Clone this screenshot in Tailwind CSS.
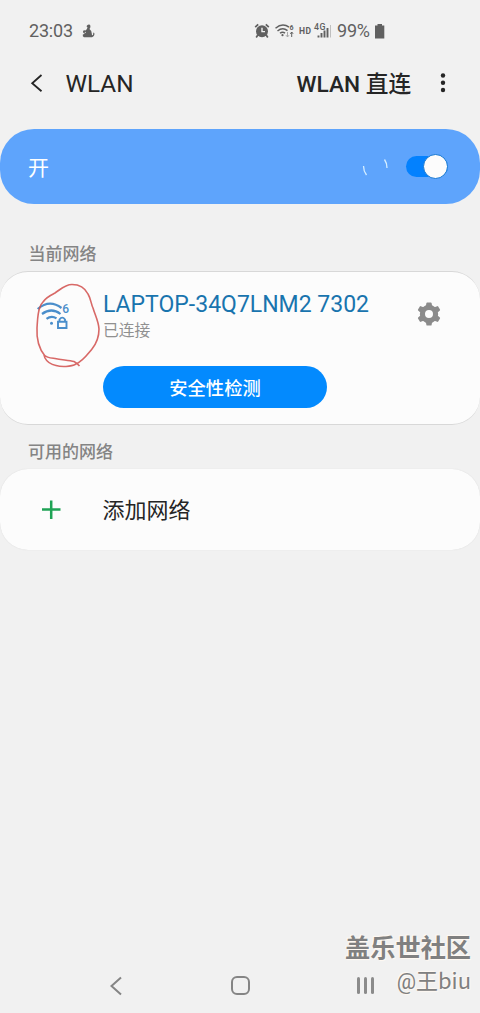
<!DOCTYPE html>
<html lang="zh-CN">
<head>
<meta charset="utf-8">
<title>WLAN</title>
<script src="https://cdn.jsdelivr.net/npm/@tailwindcss/browser@4"></script>
</head>
<body class="bg-[#f1f1f1]">
<div class="relative flex h-[1013px] w-[480px] flex-col overflow-hidden bg-[#f1f1f1] font-['Roboto','Noto_Sans_CJK_SC',sans-serif] whitespace-nowrap text-[#252525]">

  <!-- Status bar -->
  <div class="flex h-[62px] items-center pl-[29px] text-[18px] leading-none tracking-[-0.2px] text-[#606060]">
    <span class="w-[53px]">23:03</span>
    <svg class="h-[14px] w-[13px]" viewBox="0 0 13 14" fill="#606060"><path d="M4.500 2.200Q5.500 0 7.500.5Q9 1.500 8.300 3.500L7.500 5Q9.800 6.500 9.800 9.500L10 11.300Q11.500 11.300 11.300 8.500L12.300 9Q13 12 10 13.300H2Q.3 12.500.8 10.500Q1.500 9.800 3 10Q.5 9 1 7Q2 5.800 3.500 6.500Q5 5.500 5.500 3.500Z"/><path d="M2.500 8.200 3.800 7.800 3.600 9.300Z" fill="#f1f1f1"/></svg>
    <svg class="ml-[159px] h-[16px] w-[76px]" viewBox="0 0 76 16" fill="none" stroke="#606060">
      <circle cx="8" cy="8.300" r="6" fill="#606060" stroke="none"/>
      <path d="M1.200 4.200 4.200 1.300M11.800 1.300 14.800 4.200M3.800 12 2.200 14.500M12.200 12 13.800 14.500" stroke-width="1.700"/>
      <path d="M8 4.800V8.600H11" stroke="#f1f1f1" stroke-width="1.400"/>
      <path d="M21.500 5.200Q28.500-.7 35 4.200M23.500 8Q28.500 3.800 33.500 7.600M26 10.300Q28.500 8.200 31 10.100" stroke-width="1.500"/>
      <circle cx="28.500" cy="12.200" r="1.100" fill="#606060" stroke="none"/>
      <path d="M33.500 9V14M32 12.200 33.500 14 35 12.200" stroke="#aaa"/><path d="M37.700 14V9M36.300 10.800 37.700 9 39.100 10.800"/>
      <g fill="#606060" stroke="none" font-family="Roboto" font-weight="700" letter-spacing="0"><text x="35.500" y="6.500" font-size="7">6</text><text x="45" y="10.700" font-size="8.500" textLength="12">HD</text><text x="60" y="7" font-size="8.800" textLength="11.500" font-weight="500">4G</text></g>
      <path d="M64.500 14.500V12.500M67.500 14.500V10M70.500 14.500V7.500" stroke-width="1.900"/><path d="M73.500 14.500V5" stroke-width="1.900"/>
    </svg>
    <svg class="h-[16px] w-[3px]" viewBox="0 0 3 16"><path d="M0 2H.7V14.500H0Z" fill="#aaa"/></svg>
    <span class="ml-[4px] w-[37.500px]">99%</span>
    <svg class="h-[15px] w-[10px]" viewBox="0 0 10 15"><path d="M2.500 0H7V1.500H9.300V14.500H0V1.500H2.500Z" fill="#606060"/></svg>
  </div>

  <!-- Title bar -->
  <header class="flex h-[67px] items-start pt-[3px]">
    <div class="flex h-[36px] w-full items-center pl-[30px]">
      <svg class="h-[18px] w-[14px]" viewBox="0 0 14 18" fill="none" stroke="#252525" stroke-width="1.800"><path d="M11.500 1 2.200 9.200 11.500 17.200"/></svg>
      <h1 class="ml-[21.500px] w-[231px] pt-[2px] text-[24.300px] leading-none">WLAN</h1>
      <span class="w-[142px] pt-[5px] text-[22.700px] leading-none font-medium">WLAN 直连</span>
      <svg class="h-[20px] w-[7px]" viewBox="0 0 7 20" fill="#252525"><circle cx="4" cy="2.500" r="2.200"/><circle cx="4" cy="9.700" r="2.200"/><circle cx="4" cy="17" r="2.200"/></svg>
    </div>
  </header>

  <!-- Master switch -->
  <section class="flex h-[75px] items-center rounded-[34px] bg-[#5ea4fc] pl-[28px] text-white">
    <span class="w-[334px] pt-[4px] text-[21px] leading-none">开</span>
    <svg class="h-[18px] w-[27px]" viewBox="0 0 27 18" fill="none" stroke="#d5eeff" stroke-width="1.300"><path d="M1.500 8Q1.500 13 4.500 17M22.500 1.500Q25 5 25 10"/></svg>
    <div class="ml-[17px] flex h-[21px] w-[42px] items-center justify-end rounded-full bg-[#0381fe]">
      <div class="h-[25px] w-[25px] shrink-0 rounded-full border border-[#1577d3] bg-[#fcfcfc]"></div>
    </div>
  </section>

  <h2 class="flex h-[67px] items-end pb-[8px] pl-[28.500px] text-[17px] leading-[17px] font-medium text-[#848484]">当前网络</h2>

  <!-- Connected network -->
  <section class="flex h-[154px] rounded-[28px] border-y border-[#d8d8d8] bg-[#fcfcfc]">
    <div class="w-[103px] shrink-0 pt-[9px] pl-[33px]">
      <svg class="h-[90px] w-[70px]" viewBox="33 281 70 90" fill="none">
        <path d="M37.700 309Q49.500 299 61.500 308M42 314Q51.500 307 60.500 314M46.500 318.800Q51.500 315 56.500 318.300" stroke="#4a8ecb" stroke-width="2.200"/>
        <circle cx="51.500" cy="323.200" r="1.500" fill="#4a8ecb"/>
        <text x="62.300" y="313.300" font-family="Roboto" font-size="12" font-weight="500" fill="#4a8ecb">6</text>
        <path d="M58 321.700H66.500V328H58ZM59.500 321.500V319.500Q62.200 315.800 65 319.500V321.500" stroke="#4a8ecb" stroke-width="1.900"/>
        <path d="M43 302C46 297 51 295 55 293C61 289 65 284.500 72 284.500C80 284.500 85 288 88 294C91 299 91 304 93 308C95 315 98.500 321 99 329C99 337 96 344 92 349C87 355 83 361 76 364C71 367 61 367 56 365.500C51 364.500 47 362 45 358L44 355C47 358 51 358 55 358.500C62 360 69 360 74 361.500Q77 363 79.500 366M45 356C37.500 347 36.500 337 37 328C37.500 321 37.500 313 40 307Q41 304 43 302" stroke="#d14f4c" stroke-opacity=".85" stroke-width="1.600" stroke-linejoin="round"/>
      </svg>
    </div>
    <div class="flex w-[312px] flex-col items-start pt-[20px]">
      <span class="text-[23px] leading-[25px] text-[#1974ae]">LAPTOP-34Q7LNM2 7302</span>
      <span class="mt-[5px] text-[15.800px] leading-[18px] text-[#909090]">已连接</span>
      <button class="mt-[26px] flex h-[42px] w-[224px] items-center justify-center rounded-full bg-[#038afe] pt-[4px] text-[18.300px] leading-none font-medium text-white">安全性检测</button>
    </div>
    <svg class="mt-[29px] ml-[0.500px] h-[26px] w-[26px]" viewBox="-13 -13 26 26" fill="none" stroke="#8b8b8b">
      <circle r="6.600" stroke-width="5.200"/>
      <path d="M-2.300-8-1.800-10.800H1.800L2.300-8ZM-2.300 8-1.800 10.800H1.800L2.300 8ZM5.800-6 8.500-7.100 10.300-4 8.100-2ZM-5.800 6-8.500 7.100-10.300 4-8.100 2ZM5.800 6 8.500 7.100 10.300 4 8.100 2ZM-5.800-6-8.500-7.100-10.300-4-8.100-2Z" fill="#8b8b8b" stroke-width="1.600" stroke-linejoin="round"/>
    </svg>
  </section>

  <h2 class="flex h-[44px] items-end pb-[8px] pl-[28px] text-[17px] leading-[17px] font-medium text-[#848484]">可用的网络</h2>

  <!-- Add network -->
  <section class="flex h-[81px] items-center rounded-[28px] bg-[#fcfcfc] pl-[41px] shadow-[0_0_1px_#d0d0d0]">
    <svg class="h-[20px] w-[20px]" viewBox="0 0 20 20" fill="none" stroke="#1fa355" stroke-width="2.500"><path d="M1 9.500H19.500M10.200.5V19"/></svg>
    <span class="ml-[41.500px] pt-[3px] text-[22px] leading-none">添加网络</span>
  </section>

  <!-- Navigation bar -->
  <nav class="mt-auto flex h-[55px] items-center pl-[109px]">
    <svg class="h-[20px] w-[14px]" viewBox="0 0 14 20" fill="none" stroke="#858585" stroke-width="2"><path d="M12 1.500 2.500 10 12 18.500"/></svg>
    <div class="ml-[108px] h-[19px] w-[19px] rounded-[6px] border-2 border-[#858585]"></div>
    <div class="ml-[107px] flex gap-[4px]"><i class="h-[17px] w-[3px] rounded-full bg-[#8b8b8b]"></i><i class="h-[17px] w-[3px] rounded-full bg-[#8b8b8b]"></i><i class="h-[17px] w-[3px] rounded-full bg-[#8b8b8b]"></i></div>
  </nav>

  <!-- Watermark laid over the screen -->
  <div class="absolute right-[9px] bottom-[16px] flex flex-col items-end text-[#808080] [text-shadow:-1px_-1px_1px_#fff9f2,1px_1px_1px_#fff9f2]">
    <span class="text-[25.200px] leading-[30px] font-bold">盖乐世社区</span>
    <span class="text-[22px] leading-[30px]"><span class="text-[21.500px]">@</span>王<span class="font-['Noto_Sans_CJK_SC']">biu</span></span>
  </div>
</div>
</body>
</html>
